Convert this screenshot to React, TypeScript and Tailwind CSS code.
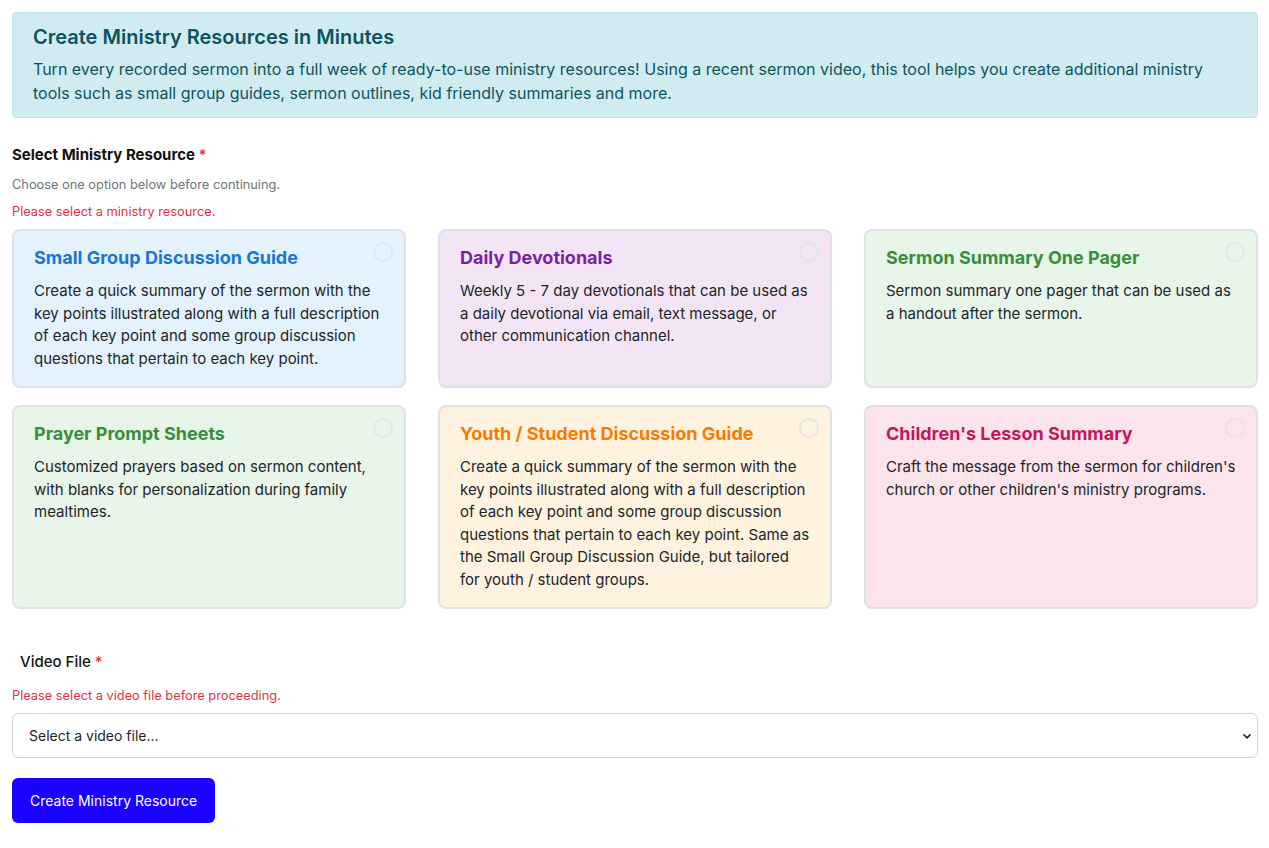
import React from "react";

type Resource = {
  title: string;
  body: string;
  bg: string;
  color: string;
};

const resources: Resource[] = [
  {
    title: "Small Group Discussion Guide",
    body: "Create a quick summary of the sermon with the key points illustrated along with a full description of each key point and some group discussion questions that pertain to each key point.",
    bg: "bg-[#e3f2fd]",
    color: "text-[#1976d2]",
  },
  {
    title: "Daily Devotionals",
    body: "Weekly 5 - 7 day devotionals that can be used as a daily devotional via email, text message, or other communication channel.",
    bg: "bg-[#f3e5f5]",
    color: "text-[#7b1fa2]",
  },
  {
    title: "Sermon Summary One Pager",
    body: "Sermon summary one pager that can be used as a handout after the sermon.",
    bg: "bg-[#e8f5e9]",
    color: "text-[#388e3c]",
  },
  {
    title: "Prayer Prompt Sheets",
    body: "Customized prayers based on sermon content, with blanks for personalization during family mealtimes.",
    bg: "bg-[#e8f5e9]",
    color: "text-[#388e3c]",
  },
  {
    title: "Youth / Student Discussion Guide",
    body: "Create a quick summary of the sermon with the key points illustrated along with a full description of each key point and some group discussion questions that pertain to each key point. Same as the Small Group Discussion Guide, but tailored for youth / student groups.",
    bg: "bg-[#fff3e0]",
    color: "text-[#f57c00]",
  },
  {
    title: "Children's Lesson Summary",
    body: "Craft the message from the sermon for children's church or other children's ministry programs.",
    bg: "bg-[#fce4ec]",
    color: "text-[#c2185b]",
  },
];

function ResourceCard({ r }: { r: Resource }) {
  return (
    <label
      className={`relative block cursor-pointer rounded-lg border-2 border-[#dee2e6] ${r.bg} px-5 pt-[13px] pb-4`}
    >
      <span className="absolute right-[11px] top-[11px] h-5 w-5 rounded-full border-2 border-[#dde3e8] opacity-80" />
      <h3 className={`text-[18px] font-bold leading-[27px] ${r.color}`}>{r.title}</h3>
      <p className="mt-[9px] text-[15px] leading-[22.5px] text-[#212529]">{r.body}</p>
    </label>
  );
}

export default function App() {
  return (
    <div
      className="min-h-screen bg-white pl-3 pr-[11px] py-3 text-[#212529]"
      style={{ fontFamily: "Inter, 'Noto Sans', sans-serif" }}
    >
      <div className="rounded border border-[#bee5eb] bg-[#d1ecf1] px-5 pt-[10px] pb-[12px] text-[#0c5460]">
        <h2 className="text-[20px] font-semibold leading-[28px]">Create Ministry Resources in Minutes</h2>
        <p className="mt-[6px] text-[16px] leading-[24px]">
          Turn every recorded sermon into a full week of ready-to-use ministry resources! Using a recent sermon video,
          this tool helps you create additional ministry tools such as small group guides, sermon outlines, kid friendly
          summaries and more.
        </p>
      </div>

      <div className="mt-[26px]">
        <div className="text-[15px] font-bold leading-[22px] text-[#111]">
          Select Ministry Resource <span className="font-semibold text-[#dc3545]">*</span>
        </div>
        <div className="mt-[10px] text-[12.8px] leading-[18px] text-[#6c757d]">Choose one option below before continuing.</div>
        <div className="mt-[9px] text-[12.8px] leading-[18px] text-[#dc3545]">Please select a ministry resource.</div>

        <div className="mt-[8px] grid grid-cols-3 gap-x-8 gap-y-[17px]">
          {resources.map((r) => (
            <ResourceCard key={r.title} r={r} />
          ))}
        </div>
      </div>

      <div className="mt-[42px] px-2 text-[15px] font-medium leading-[22px] text-[#111]">
        Video File <span className="text-[#dc3545]">*</span>
      </div>
      <div className="mt-[14px] text-[12.8px] leading-[18px] text-[#dc3545]">Please select a video file before proceeding.</div>
      <div className="relative mt-[8px] flex h-[45px] items-center rounded-md border border-[#ced4da] bg-white pl-4 pr-[5px]">
        <span className="flex-1 text-[14px] text-[#212529]">Select a video file...</span>
        <svg width="10" height="10" viewBox="0 0 16 16" className="text-[#222]">
          <path d="M3 6l5 5 5-5" fill="none" stroke="currentColor" strokeWidth="2.6" strokeLinecap="round" strokeLinejoin="round" />
        </svg>
      </div>

      <button className="mt-[20px] h-[45px] rounded-md bg-[#1a00ff] px-[18px] text-[14px] text-white">
        Create Ministry Resource
      </button>
    </div>
  );
}
